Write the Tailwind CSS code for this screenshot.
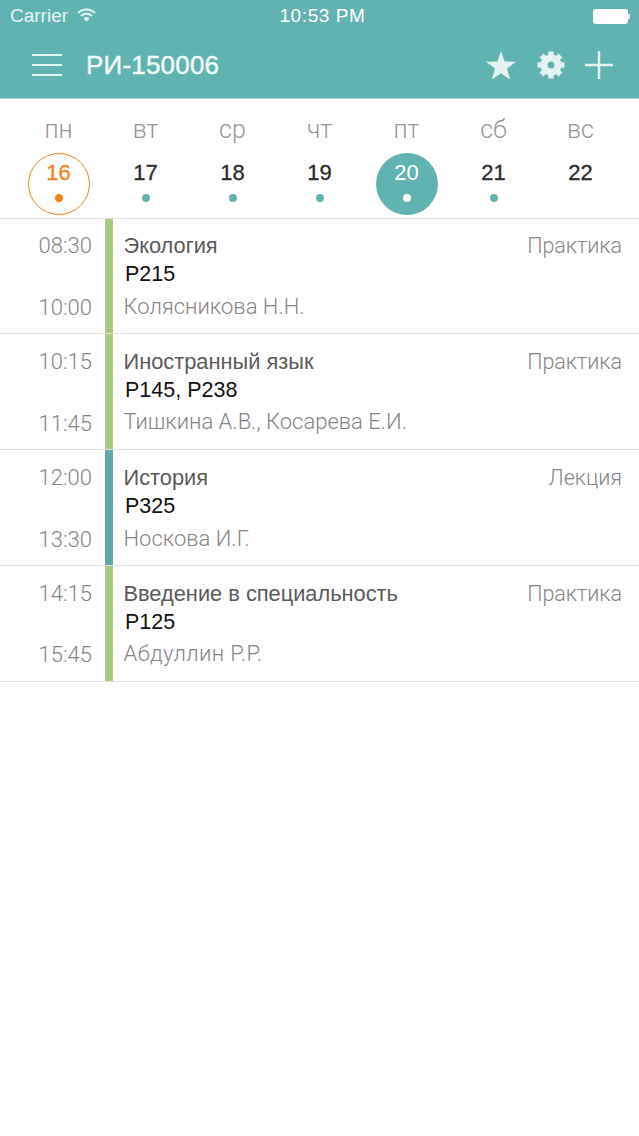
<!DOCTYPE html>
<html lang="ru">
  <head>
    <meta charset="UTF-8" />
    <meta name="viewport" content="width=device-width, initial-scale=1.0" />
    <title>Расписание</title>
    <script src="https://cdn.jsdelivr.net/npm/@tailwindcss/browser@4"></script>
  </head>
  <body class="bg-white font-['Liberation_Sans',sans-serif]">
    <div class="w-[639px] h-[1136px] overflow-hidden bg-white">
      <!-- Header -->
      <header class="h-[99px] bg-[#61b3b2] border-b border-[#a5d6d5] text-white">
        <div class="h-[32px] flex items-center justify-between pl-[10px] pr-[9px] relative">
          <div class="flex items-center gap-[9px] text-[19px] text-[#e6f4f3]">
            <span>Carrier</span>
            <svg width="19" height="14" viewBox="0 0 19 14" class="-mt-[2px]">
              <path d="M1 5 A12 12 0 0 1 18 5" fill="none" stroke="#e6f4f3" stroke-width="2" />
              <path d="M4 8 A8 8 0 0 1 15 8" fill="none" stroke="#e6f4f3" stroke-width="2" />
              <path d="M6.5 10.5 A4.4 4.4 0 0 1 12.5 10.5 L9.5 13.5 Z" fill="#e6f4f3" />
            </svg>
          </div>
          <div class="absolute left-[3px] w-[639px] text-center text-[19px] tracking-[0.6px]">10:53 PM</div>
          <div class="flex items-center">
            <div class="w-[35px] h-[15px] rounded-[3px] bg-white"></div>
            <div class="w-[2px] h-[5px] bg-white/80"></div>
          </div>
        </div>
        <div class="h-[66px] flex items-center pl-[32px] pr-[26px]">
          <div class="w-[30px] flex flex-col gap-[7.5px] mr-[24px]">
            <div class="h-[2.5px] bg-[#e6f4f3]"></div>
            <div class="h-[2.5px] bg-[#e6f4f3]"></div>
            <div class="h-[2.5px] bg-[#e6f4f3]"></div>
          </div>
          <h1 class="text-[26px] font-normal text-[#f2fafa] [-webkit-text-stroke:0.4px_#f2fafa] tracking-[0.2px]">РИ-150006</h1>
          <div class="ml-auto flex items-center">
            <svg width="30" height="29" viewBox="0 0 30 29" class="mr-[21px]">
              <polygon points="15,0 18.7,10.4 30,10.8 21,17.6 24.2,28.6 15,22.2 5.8,28.6 9,17.6 0,10.8 11.3,10.4" fill="#e4f3f2" />
            </svg>
            <svg width="28" height="28" viewBox="0 0 28 28" class="mr-[20px]">
              <circle cx="14" cy="14" r="7" fill="none" stroke="#e4f3f2" stroke-width="7" />
              <g stroke="#e4f3f2" stroke-width="5.5">
                <path d="M14 0.5V5" />
                <path d="M14 23V27.5" />
                <path d="M0.5 14H5" />
                <path d="M23 14H27.5" />
                <path d="M4.5 4.5L7.6 7.6" />
                <path d="M20.4 20.4L23.5 23.5" />
                <path d="M4.5 23.5L7.6 20.4" />
                <path d="M20.4 7.6L23.5 4.5" />
              </g>
            </svg>
            <svg width="28" height="28" viewBox="0 0 28 28">
              <path d="M14 0V28M0 14H28" stroke="#e4f3f2" stroke-width="2.5" />
            </svg>
          </div>
        </div>
      </header>

      <!-- Week -->
      <section class="h-[120px] px-[15px] grid grid-cols-7 border-b border-[#dfdfdf]">
        <div class="flex flex-col items-center">
          <div class="h-[61px] pt-[17px] font-['Roboto',sans-serif] font-light text-[25px] leading-[28px] text-[#969696]">пн</div>
          <div class="mt-[-7px] w-[62px] h-[62px] rounded-full border-[1.5px] border-[#f08318] flex flex-col items-center">
            <span class="mt-[5.5px] text-[22px] leading-[26px] text-[#f08318] [-webkit-text-stroke:0.3px_#f08318]">16</span>
            <span class="mt-[8px] w-[8px] h-[8px] rounded-full bg-[#f08318]"></span>
          </div>
        </div>
        <div class="flex flex-col items-center">
          <div class="h-[61px] pt-[17px] font-['Roboto',sans-serif] font-light text-[25px] leading-[28px] text-[#969696]">вт</div>
          <div class="mt-[-7px] w-[62px] h-[62px] flex flex-col items-center">
            <span class="mt-[7px] text-[22px] leading-[26px] text-[#2b2b2b] [-webkit-text-stroke:0.3px_#2b2b2b]">17</span>
            <span class="mt-[8px] w-[8px] h-[8px] rounded-full bg-[#61b3b2]"></span>
          </div>
        </div>
        <div class="flex flex-col items-center">
          <div class="h-[61px] pt-[17px] font-['Roboto',sans-serif] font-light text-[25px] leading-[28px] text-[#969696]">ср</div>
          <div class="mt-[-7px] w-[62px] h-[62px] flex flex-col items-center">
            <span class="mt-[7px] text-[22px] leading-[26px] text-[#2b2b2b] [-webkit-text-stroke:0.3px_#2b2b2b]">18</span>
            <span class="mt-[8px] w-[8px] h-[8px] rounded-full bg-[#61b3b2]"></span>
          </div>
        </div>
        <div class="flex flex-col items-center">
          <div class="h-[61px] pt-[17px] font-['Roboto',sans-serif] font-light text-[25px] leading-[28px] text-[#969696]">чт</div>
          <div class="mt-[-7px] w-[62px] h-[62px] flex flex-col items-center">
            <span class="mt-[7px] text-[22px] leading-[26px] text-[#2b2b2b] [-webkit-text-stroke:0.3px_#2b2b2b]">19</span>
            <span class="mt-[8px] w-[8px] h-[8px] rounded-full bg-[#61b3b2]"></span>
          </div>
        </div>
        <div class="flex flex-col items-center">
          <div class="h-[61px] pt-[17px] font-['Roboto',sans-serif] font-light text-[25px] leading-[28px] text-[#969696]">пт</div>
          <div class="mt-[-7px] w-[62px] h-[62px] rounded-full bg-[#61b3b2] flex flex-col items-center">
            <span class="mt-[7px] text-[22px] leading-[26px] text-white">20</span>
            <span class="mt-[8px] w-[8px] h-[8px] rounded-full bg-white"></span>
          </div>
        </div>
        <div class="flex flex-col items-center">
          <div class="h-[61px] pt-[17px] font-['Roboto',sans-serif] font-light text-[25px] leading-[28px] text-[#969696]">сб</div>
          <div class="mt-[-7px] w-[62px] h-[62px] flex flex-col items-center">
            <span class="mt-[7px] text-[22px] leading-[26px] text-[#2b2b2b] [-webkit-text-stroke:0.3px_#2b2b2b]">21</span>
            <span class="mt-[8px] w-[8px] h-[8px] rounded-full bg-[#61b3b2]"></span>
          </div>
        </div>
        <div class="flex flex-col items-center">
          <div class="h-[61px] pt-[17px] font-['Roboto',sans-serif] font-light text-[25px] leading-[28px] text-[#969696]">вс</div>
          <div class="mt-[-7px] w-[62px] h-[62px] flex flex-col items-center">
            <span class="mt-[7px] text-[22px] leading-[26px] text-[#2b2b2b] [-webkit-text-stroke:0.3px_#2b2b2b]">22</span>
          </div>
        </div>
      </section>

      <!-- Lessons -->
      <main>
        <article class="h-[114px] flex border-b border-[#dfdfdf] box-content">
          <div class="w-[105px] pr-[13px] pt-[13px] flex flex-col items-end font-['Roboto',sans-serif] font-light text-[22px] leading-[28px] text-[#858585]">
            <span>08:30</span>
            <span class="mt-[34px]">10:00</span>
          </div>
          <div class="w-[8px] bg-[#a8c97f]"></div>
          <div class="flex-1 pl-[10.5px] pr-[17px] pt-[13px]">
            <div class="flex justify-between leading-[28px]">
              <span class="text-[21.8px] text-[#5a5a5a]">Экология</span>
              <span class="text-[21.5px] font-['Roboto',sans-serif] font-light text-[#858585]">Практика</span>
            </div>
            <div class="pl-[1.5px] text-[21.5px] leading-[28px] text-[#111111]">Р215</div>
            <div class="font-['Roboto',sans-serif] font-light text-[22px] leading-[28px] text-[#858585] mt-[5px]">Колясникова Н.Н.</div>
          </div>
        </article>
        <article class="h-[115px] flex border-b border-[#dfdfdf] box-content">
          <div class="w-[105px] pr-[13px] pt-[14px] flex flex-col items-end font-['Roboto',sans-serif] font-light text-[22px] leading-[28px] text-[#858585]">
            <span>10:15</span>
            <span class="mt-[34px]">11:45</span>
          </div>
          <div class="w-[8px] bg-[#a8c97f]"></div>
          <div class="flex-1 pl-[10.5px] pr-[17px] pt-[14px]">
            <div class="flex justify-between leading-[28px]">
              <span class="text-[21.8px] text-[#5a5a5a]">Иностранный язык</span>
              <span class="text-[21.5px] font-['Roboto',sans-serif] font-light text-[#858585]">Практика</span>
            </div>
            <div class="pl-[1.5px] text-[21.5px] leading-[28px] text-[#111111]">Р145, Р238</div>
            <div class="font-['Roboto',sans-serif] font-light text-[22px] leading-[28px] text-[#858585] mt-[4px]">Тишкина А.В., Косарева Е.И.</div>
          </div>
        </article>
        <article class="h-[115px] flex border-b border-[#dfdfdf] box-content">
          <div class="w-[105px] pr-[13px] pt-[14px] flex flex-col items-end font-['Roboto',sans-serif] font-light text-[22px] leading-[28px] text-[#858585]">
            <span>12:00</span>
            <span class="mt-[34px]">13:30</span>
          </div>
          <div class="w-[8px] bg-[#61a8a8]"></div>
          <div class="flex-1 pl-[10.5px] pr-[17px] pt-[14px]">
            <div class="flex justify-between leading-[28px]">
              <span class="text-[21.8px] text-[#5a5a5a]">История</span>
              <span class="text-[21.5px] font-['Roboto',sans-serif] font-light text-[#858585]">Лекция</span>
            </div>
            <div class="pl-[1.5px] text-[21.5px] leading-[28px] text-[#111111]">Р325</div>
            <div class="font-['Roboto',sans-serif] font-light text-[22px] leading-[28px] text-[#858585] mt-[5px]">Носкова И.Г.</div>
          </div>
        </article>
        <article class="h-[115px] flex border-b border-[#e6e0ee] box-content">
          <div class="w-[105px] pr-[13px] pt-[14px] flex flex-col items-end font-['Roboto',sans-serif] font-light text-[22px] leading-[28px] text-[#858585]">
            <span>14:15</span>
            <span class="mt-[33px]">15:45</span>
          </div>
          <div class="w-[8px] bg-[#a8c97f]"></div>
          <div class="flex-1 pl-[10.5px] pr-[17px] pt-[14px]">
            <div class="flex justify-between leading-[28px]">
              <span class="text-[21.8px] text-[#5a5a5a]">Введение в специальность</span>
              <span class="text-[21.5px] font-['Roboto',sans-serif] font-light text-[#858585]">Практика</span>
            </div>
            <div class="pl-[1.5px] text-[21.5px] leading-[28px] text-[#111111]">Р125</div>
            <div class="font-['Roboto',sans-serif] font-light text-[22px] leading-[28px] text-[#858585] mt-[4px] tracking-[0.4px]">Абдуллин Р.Р.</div>
          </div>
        </article>
      </main>
    </div>
  </body>
</html>
